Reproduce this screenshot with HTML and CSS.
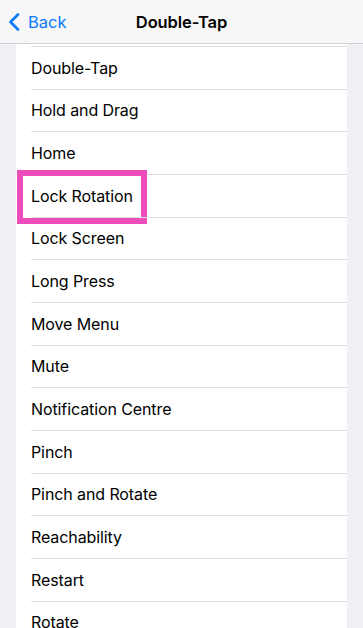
FILE: index.html
```html
<!DOCTYPE html>
<html>
<head>
<meta charset="utf-8">
<link rel="stylesheet" href="styles.css">
</head>
<body>
<header class="nav">
  <div class="back">
    <svg class="chev" width="12" height="18" viewBox="0 0 12 18"><path d="M10 1.5 L2.5 9 L10 16.5" fill="none" stroke="#0a7aff" stroke-width="2.6" stroke-linecap="round" stroke-linejoin="round"/></svg>
    <span>Back</span>
  </div>
  <div class="title">Double-Tap</div>
</header>
<main class="list">
  <div class="row"><span>Double-Tap</span></div>
  <div class="row"><span>Hold and Drag</span></div>
  <div class="row"><span>Home</span></div>
  <div class="row selected"><span>Lock Rotation</span><div class="highlight"></div></div>
  <div class="row"><span>Lock Screen</span></div>
  <div class="row"><span>Long Press</span></div>
  <div class="row"><span>Move Menu</span></div>
  <div class="row"><span>Mute</span></div>
  <div class="row"><span>Notification Centre</span></div>
  <div class="row"><span>Pinch</span></div>
  <div class="row"><span>Pinch and Rotate</span></div>
  <div class="row"><span>Reachability</span></div>
  <div class="row"><span>Restart</span></div>
  <div class="row"><span>Rotate</span></div>
</main>
</body>
</html>
```
FILE: styles.css
```css
html, body {
  margin: 0;
  padding: 0;
  background: #efeff4;
  font-family: Inter, "Liberation Sans", sans-serif;
  color: #000;
  overflow: hidden;
}
.nav {
  height: 43px;
  background: #f7f7f7;
  border-bottom: 1px solid #cfcfd3;
  position: relative;
  display: flex;
  align-items: center;
  justify-content: center;
}
.back {
  position: absolute;
  left: 8px;
  top: 0;
  height: 43px;
  display: flex;
  align-items: center;
  gap: 8px;
  color: #0a7aff;
  font-size: 16.5px;
}
.chev { display: block; margin-top: 1px; }
.title {
  font-size: 16.5px;
  font-weight: 600;
  letter-spacing: -0.1px;
}
.list {
  margin: 0 16px;
  background: #fff;
  padding-top: 2px;
}
.row {
  position: relative;
  margin-left: 15px;
  height: 42.67px;
  box-sizing: border-box;
  border-top: 1px solid #dedee2;
  display: flex;
  align-items: center;
  font-size: 16px;
  letter-spacing: -0.1px;
}
.highlight {
  position: absolute;
  left: -14px;
  top: -5px;
  width: 130px;
  height: 54px;
  box-sizing: border-box;
  border: 6.5px solid #ec4dba;
}
```
